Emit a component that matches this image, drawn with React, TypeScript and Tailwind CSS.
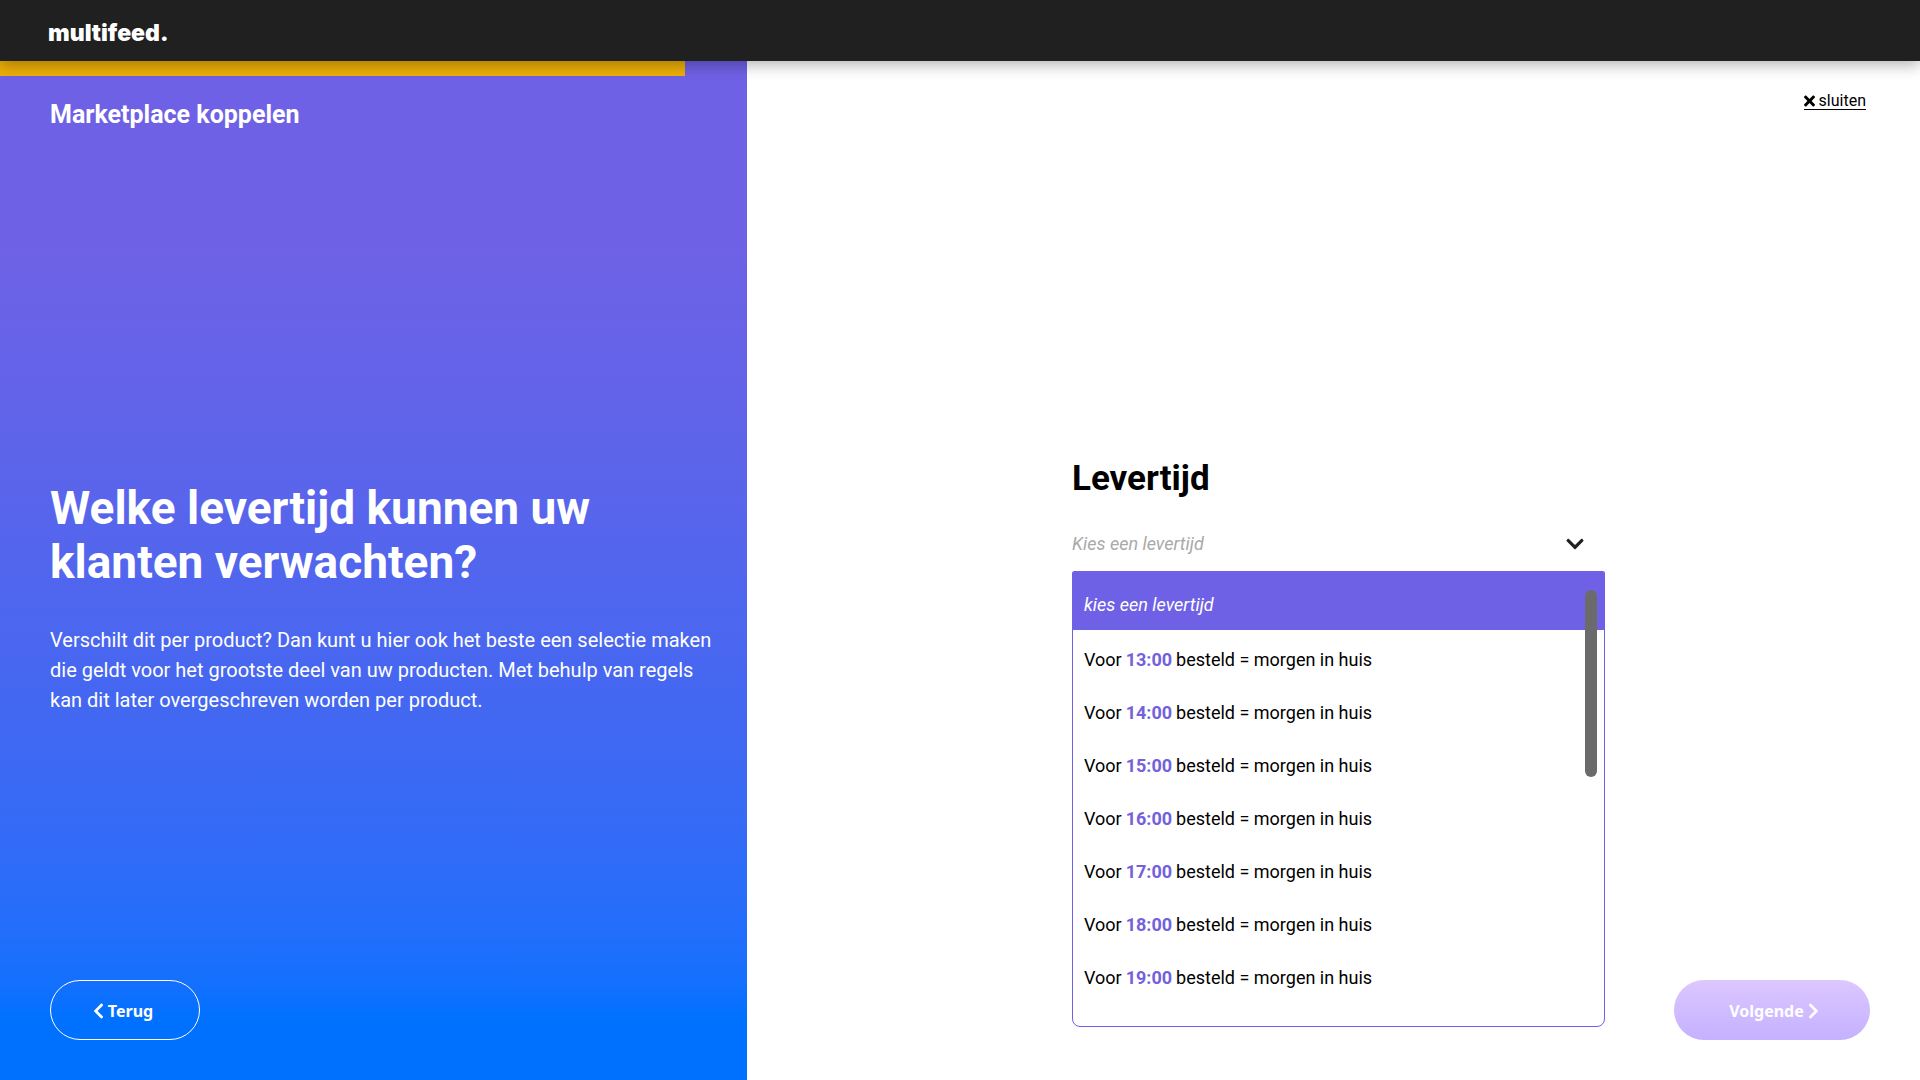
import { FaChevronDown, FaChevronLeft, FaChevronRight, FaTimes } from "react-icons/fa";

const times = ["13:00", "14:00", "15:00", "16:00", "17:00", "18:00", "19:00"];

function Header() {
  return (
    <header className="relative z-10 flex h-[61px] shrink-0 items-center bg-[#202020] px-12 shadow-[0_4px_14px_rgba(0,0,0,0.3)]">
      <a href="#" className="pt-1 font-['Inter'] text-[23px] font-black leading-7 text-white">
        multifeed.
      </a>
    </header>
  );
}

function IntroPanel() {
  return (
    <aside className="flex w-[747px] max-w-[39%] shrink-0 flex-col bg-linear-to-b from-[#6f61e5] from-17% via-[#4367f1] via-63% to-[#0071ff] to-94% text-white">
      <div className="h-[15px] w-11/12 bg-[#edae08]" role="progressbar" aria-label="Voortgang" aria-valuenow={92} />
      <div className="flex flex-1 flex-col pt-6 pr-6 pb-10 pl-[50px]">
        <p className="text-[25px] font-bold leading-[30px]">Marketplace koppelen</p>
        <div className="flex flex-1 flex-col justify-center gap-9 pt-[86px]">
          <h1 className="max-w-[600px] text-[46px] font-bold leading-[54px]">Welke levertijd kunnen uw klanten verwachten?</h1>
          <p className="text-xl leading-[30px]">
            Verschilt dit per product? Dan kunt u hier ook het beste een selectie maken die geldt voor het grootste deel
            van uw producten. Met behulp van regels kan dit later overgeschreven worden per product.
          </p>
        </div>
        <button
          type="button"
          className="flex h-[60px] w-[150px] items-center justify-center gap-1 rounded-full border border-white pt-0.5 pr-1 font-['Noto_Sans'] text-base font-bold"
        >
          <FaChevronLeft className="h-[18px] w-[11px]" />
          Terug
        </button>
      </div>
    </aside>
  );
}

function DeliveryField() {
  return (
    <div className="relative w-[533px]">
      <h2 id="levertijd" className="text-[35px] font-bold leading-[44px]">
        Levertijd
      </h2>
      <button
        type="button"
        aria-labelledby="levertijd"
        aria-haspopup="listbox"
        aria-expanded="true"
        className="mt-4 flex h-[54px] w-full items-center justify-between pr-5 text-lg italic text-[#a9a9a9]"
      >
        Kies een levertijd
        <FaChevronDown className="size-5 text-[#202020]" />
      </button>
      <div className="absolute top-full left-0 w-full overflow-hidden rounded-t-xs rounded-b-lg border border-[#6f61e5] bg-white">
        <ul role="listbox" aria-labelledby="levertijd" className="pb-[22px] text-lg">
          <li role="option" aria-selected="true" className="mb-[3px] flex h-[58px] items-center bg-[#6f61e5] px-[11px] pt-2 italic text-white">
            kies een levertijd
          </li>
          {times.map((time) => (
            <li key={time} role="option" aria-selected="false" className="flex h-[53px] items-center gap-1 px-[11px]">
              Voor <strong className="text-[#7361dc]">{time}</strong> besteld = morgen in huis
            </li>
          ))}
        </ul>
        <div className="absolute top-[18px] right-[7px] h-[187px] w-3 rounded-full bg-[#6b6b6b]" />
      </div>
    </div>
  );
}

export default function App() {
  return (
    <div className="flex min-h-screen flex-col bg-white font-['Roboto',sans-serif] text-black">
      <Header />
      <div className="flex flex-1">
        <IntroPanel />
        <main className="flex flex-1 flex-col pt-8 pr-[50px] pb-10 pl-[60px]">
          <a href="#" className="mr-1 flex items-center gap-1 self-end border-b border-black text-base leading-4">
            <FaTimes className="h-4 w-[11px]" />
            sluiten
          </a>
          <div className="flex flex-1 flex-col items-center justify-center pb-[62px]">
            <DeliveryField />
          </div>
          <button
            type="button"
            disabled
            className="flex h-[60px] w-[196px] items-center justify-center gap-1 self-end rounded-full bg-linear-to-b from-[#dcc7ff] to-[#c5b1ff] pt-0.5 pl-1 font-['Noto_Sans'] text-base font-bold text-white"
          >
            Volgende
            <FaChevronRight className="h-[18px] w-[11px]" />
          </button>
        </main>
      </div>
    </div>
  );
}
